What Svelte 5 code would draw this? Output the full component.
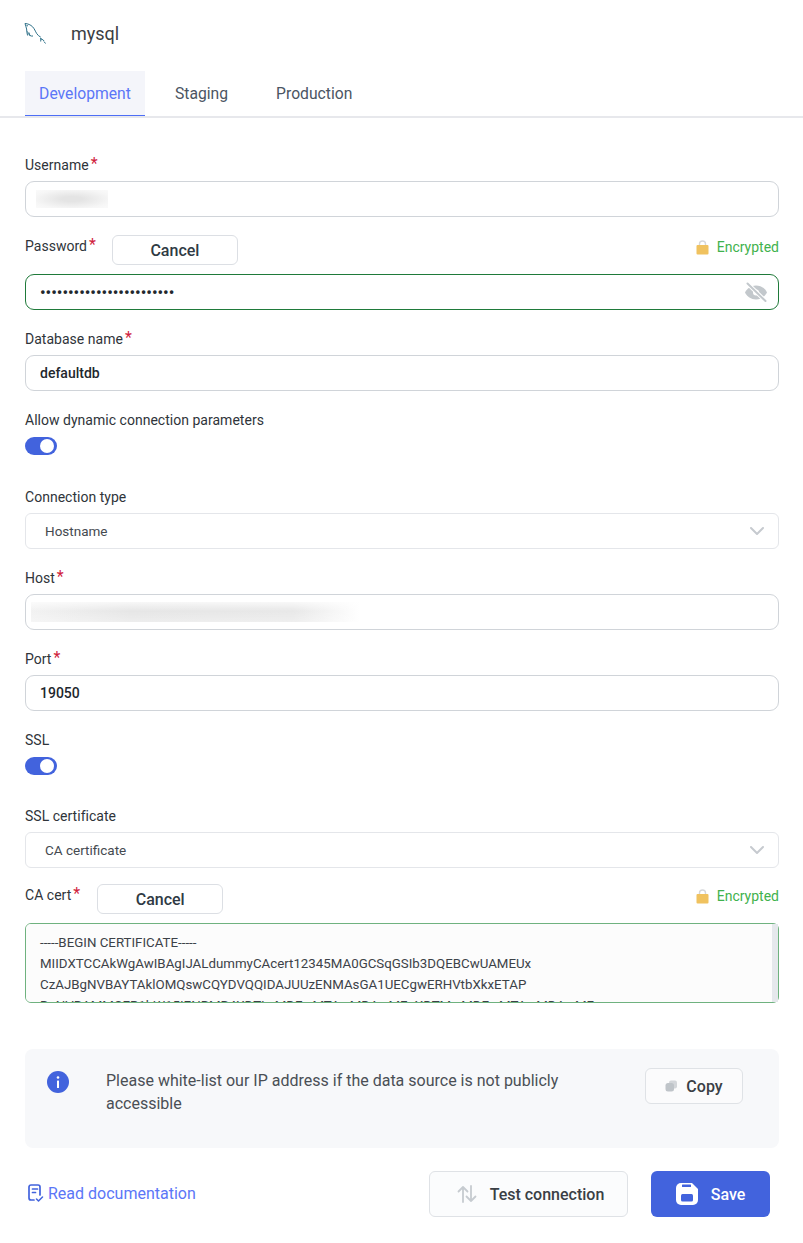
<script>
  const caCert = `-----BEGIN CERTIFICATE-----
MIIDXTCCAkWgAwIBAgIJALdummyCAcert12345MA0GCSqGSIb3DQEBCwUAMEUx
CzAJBgNVBAYTAklOMQswCQYDVQQIDAJUUzENMAsGA1UECgwERHVtbXkxETAP
BgNVBAMMCER1bW15IENBMB4XDTIwMDEwMTAwMDAwMFoXDTMwMDEwMTAwMDAwMFow
MEUxCzAJBgNVBAYTAklOMQswCQYDVQQIDAJUUzENMAsGA1UECgwERHVtbXk=
-----END CERTIFICATE-----`;

  let activeTab = $state('Development');
  let showPassword = $state(false);
  let dynamicParams = $state(true);
  let ssl = $state(true);
  const tabs = ['Development', 'Staging', 'Production'];
</script>

{#snippet star()}<span class="star">*</span>{/snippet}

{#snippet encrypted()}
  <span class="encrypted">
    <svg width="13" height="15" viewBox="0 0 13 15">
      <path d="M3.5 6V4a3 3 0 0 1 6 0v2" fill="none" stroke="#d5d7da" stroke-width="1.4" />
      <rect x="0.5" y="5" width="12" height="9.5" rx="1" fill="#f0c25f" />
    </svg>
    Encrypted
  </span>
{/snippet}

{#snippet chevron()}
  <svg class="chevron" width="16" height="10" viewBox="0 0 16 10">
    <path d="M2 2l6 6 6-6" fill="none" stroke="#c6cacf" stroke-width="2" stroke-linecap="round" stroke-linejoin="round" />
  </svg>
{/snippet}

<div class="page">
  <header class="title">
    <svg class="logo" width="24" height="24" viewBox="0 0 24 24" fill="none" stroke="#2f7189" stroke-width="1">
      <path d="M1 1.5c3 .2 5.500 1.300 7.500 3.200 2 2 2.700 4.500 4.300 7 1 1.500 2.300 2.600 4 3.500" />
      <path d="M1 1.500c.3 2 1.300 3.300 1.600 5.500.2 2 .2 4.500 1 6.500" />
      <path d="M3.500 9.500c.6 1.500.8 3 2.500 4 1 .5 2 .8 3 .5M5 10.500c.4 1.200.3 2 1 3" />
      <path d="M16 16.500c1 .8 3.200 .6 4 2.500M17 16l-.3 3.500M20 19.500l1.500 2" />
      <path d="M2.500 3.500l1.300.3" stroke-width="1.200" />
    </svg>
    <span class="title-text">mysql</span>
  </header>

  <nav class="tabs">
    {#each tabs as tab}
      <button type="button" class="tab" class:active={activeTab === tab} onclick={() => (activeTab = tab)}>{tab}</button>
    {/each}
  </nav>

  <form class="form" onsubmit={(e) => e.preventDefault()}>
    <div class="field">
      <div class="label">Username{@render star()}</div>
      <div class="input">
        <span class="blur user"></span>
      </div>
    </div>

    <div class="field">
      <div class="label-row">
        <div class="label">Password{@render star()}</div>
        <button type="button" class="cancel pw">Cancel</button>
        {@render encrypted()}
      </div>
      <div class="input valid">
        <input type={showPassword ? 'text' : 'password'} value="abcdefghijklmnopqrstuvwx" aria-label="Password" />
        <button type="button" class="eye" aria-label="Show password" onclick={() => (showPassword = !showPassword)}>
          <svg width="24" height="20" viewBox="0 0 24 20">
            <path d="M12 3.500C7 3.500 3 6.500 1 10.500c2 4 6 7 11 7s9-3 11-7c-2-4-6-7-11-7z" fill="#c3c8cc" />
            <circle cx="12" cy="10.500" r="3" fill="#fff" />
            <path d="M3.500 1.500l18 17.500" stroke="#fff" stroke-width="4" />
            <path d="M3.500 1.500l18 17.500" stroke="#c3c8cc" stroke-width="2" stroke-linecap="round" />
          </svg>
        </button>
      </div>
    </div>

    <div class="field">
      <div class="label">Database name{@render star()}</div>
      <div class="input"><input value="defaultdb" aria-label="Database name" /></div>
    </div>

    <div class="field toggle-field">
      <div class="label">Allow dynamic connection parameters</div>
      <button type="button" class="toggle" class:on={dynamicParams} aria-label="Allow dynamic connection parameters" onclick={() => (dynamicParams = !dynamicParams)}></button>
    </div>

    <div class="field">
      <div class="label">Connection type</div>
      <div class="input select"><span>Hostname</span>{@render chevron()}</div>
    </div>

    <div class="field">
      <div class="label">Host{@render star()}</div>
      <div class="input"><span class="blur host"></span></div>
    </div>

    <div class="field">
      <div class="label">Port{@render star()}</div>
      <div class="input"><input value="19050" aria-label="Port" /></div>
    </div>

    <div class="field toggle-field ssl">
      <div class="label">SSL</div>
      <button type="button" class="toggle" class:on={ssl} aria-label="SSL" onclick={() => (ssl = !ssl)}></button>
    </div>

    <div class="field tight">
      <div class="label">SSL certificate</div>
      <div class="input select"><span>CA certificate</span>{@render chevron()}</div>
    </div>

    <div class="field">
      <div class="label-row">
        <div class="label">CA cert{@render star()}</div>
        <button type="button" class="cancel ca">Cancel</button>
        {@render encrypted()}
      </div>
      <div class="cert-wrap">
        <textarea class="cert" aria-label="CA cert" value={caCert} spellcheck="false"></textarea>
      </div>
    </div>
  </form>

  <aside class="notice">
    <svg class="info" width="22" height="22" viewBox="0 0 22 22">
      <circle cx="11" cy="11" r="11" fill="#4263dd" />
      <rect x="10" y="9.500" width="2" height="7.500" rx="0.500" fill="#fff" />
      <circle cx="11" cy="6.500" r="1.300" fill="#fff" />
    </svg>
    <p>Please white-list our IP address if the data source is not publicly accessible</p>
    <button type="button" class="copy">
      <svg width="12" height="12" viewBox="0 0 12 12">
        <rect x="4" y="0.500" width="8" height="8" rx="2" fill="#d3d6da" />
        <rect x="0.500" y="3" width="8.500" height="8.500" rx="2.500" fill="#bfc4c9" />
      </svg>
      Copy
    </button>
  </aside>

  <footer class="actions">
    <a class="docs" href="#docs">
      <svg width="16" height="18" viewBox="0 0 16 18" fill="none" stroke="#4263dd" stroke-width="1.700" stroke-linecap="round" stroke-linejoin="round">
        <path d="M6 16H3a2 2 0 0 1-2-2V3a2 2 0 0 1 2-2h7a2 2 0 0 1 2 2v8" />
        <path d="M4.500 5h5M4.500 8.500h3" />
        <path d="M8.500 15l2 2 4-4" stroke-width="1.500" />
      </svg>
      Read documentation
    </a>
    <button type="button" class="test">
      <svg width="20" height="18" viewBox="0 0 20 18" fill="none" stroke="#c6cbd0" stroke-width="1.800" stroke-linecap="round" stroke-linejoin="round">
        <path d="M6 17V2M1.500 6.500L6 2l4.500 4.500" />
        <path d="M14 1v15M9.500 11.500L14 16l4.500-4.500" />
      </svg>
      Test connection
    </button>
    <button type="button" class="save">
      <svg width="22" height="22" viewBox="0 0 22 22">
        <path d="M5 0h11l6 6v11a5 5 0 0 1-5 5H5a5 5 0 0 1-5-5V5a5 5 0 0 1 5-5z" fill="#fff" />
        <rect x="6" y="1.500" width="9" height="2.500" rx="0.500" fill="#4263dd" />
        <rect x="5" y="11" width="12" height="7.500" rx="1.500" fill="#4263dd" />
      </svg>
      Save
    </button>
  </footer>
</div>

<style>
  :global(body) {
    margin: 0;
    background: #fff;
    font-family: Roboto, "Liberation Sans", sans-serif;
    color: #3a3f45;
  }

  .page {
    width: 803px;
    height: 1243px;
    overflow: hidden;
  }

  button {
    font-family: inherit;
    cursor: pointer;
  }

  .title {
    display: flex;
    align-items: center;
    height: 71px;
    padding: 0 25px 5px;
    box-sizing: border-box;
  }

  .logo {
    margin-top: 2px;
    margin-left: -1px;
  }

  .title-text {
    margin-left: 23px;
    font-size: 18px;
    color: #3b3e44;
  }

  .tabs {
    display: flex;
    height: 47px;
    box-sizing: border-box;
    padding-left: 25px;
    border-bottom: 2px solid #e7e8ec;
  }

  .tab {
    height: 45px;
    padding: 0 31px 0 17px;
    border: 0;
    background: none;
    font-size: 15.700px;
    color: #4b5563;
  }

  .tab.active {
    width: 120px;
    padding: 0;
    background: #f4f5fa;
    border-bottom: 1px solid #4d6ef5;
    color: #5b76f7;
    margin-right: 13px;
  }

  .form {
    padding: 36px 24px 0 25px;
  }

  .field {
    margin-bottom: 18px;
  }

  .field.tight {
    margin-bottom: 16px;
  }

  .toggle-field {
    margin-bottom: 31px;
  }

  .toggle-field.ssl {
    margin-bottom: 30px;
  }

  .label {
    display: flex;
    height: 22px;
    line-height: 22px;
    margin-bottom: 5px;
    font-size: 14px;
    letter-spacing: 0.02px;
    color: #2f343a;
  }

  .star {
    margin-left: 2px;
    font-size: 16px;
    line-height: 20px;
    color: #d0213c;
  }

  .label-row {
    display: flex;
    align-items: flex-start;
    margin-bottom: 9px;
  }

  .label-row .label {
    margin-bottom: 0;
  }

  .cancel {
    width: 126px;
    height: 30px;
    background: #fff;
    border: 1px solid #dcdfe4;
    border-radius: 6px;
    font-size: 16px;
    font-weight: 500;
    color: #2f3a44;
  }

  .cancel.pw {
    margin-left: 16px;
  }

  .cancel.ca {
    margin-left: 17px;
  }

  .encrypted {
    display: flex;
    align-items: center;
    gap: 8px;
    margin-left: auto;
    height: 22px;
    margin-top: 1px;
    font-size: 14px;
    color: #3fb24d;
  }

  .input {
    position: relative;
    display: flex;
    align-items: center;
    height: 36px;
    box-sizing: border-box;
    border: 1px solid #d0d4d9;
    border-radius: 9px;
    background: #fff;
  }

  .input.valid {
    border-color: #1f7a3a;
  }

  .input input {
    flex: 1;
    width: 100%;
    min-width: 0;
    height: 100%;
    padding: 0 14px;
    box-sizing: border-box;
    border: 0;
    outline: 0;
    background: none;
    font-family: inherit;
    font-size: 14px;
    font-weight: 500;
    color: #22272d;
  }

  .input.valid input {
    font-size: 16px;
  }

  .select {
    justify-content: space-between;
    padding: 0 13px 0 19px;
    border-color: #e4e6ea;
    border-radius: 6px;
    font-size: 13.500px;
    color: #454a50;
  }

  .blur {
    display: block;
    height: 20px;
  }

  .blur.user {
    width: 72px;
    height: 18px;
    margin-left: 10px;
    background: radial-gradient(ellipse at center, #e4e4e4 20%, #f6f6f6 75%, #fafafa 100%);
  }

  .blur.host {
    width: 328px;
    margin-left: 5px;
    background:
      linear-gradient(180deg, rgba(255, 255, 255, 0.7), rgba(255, 255, 255, 0) 45%, rgba(255, 255, 255, 0.3)),
      linear-gradient(90deg, #f2f2f2 0%, #e6e6e6 30%, #e8e8e8 80%, #fff 100%);
  }

  .eye {
    display: flex;
    padding: 0;
    margin-right: 10px;
    border: 0;
    background: none;
  }

  .toggle {
    position: relative;
    display: block;
    width: 32px;
    height: 18px;
    margin-top: 6px;
    padding: 0;
    border: 0;
    border-radius: 9px;
    background: #c9ced4;
  }

  .toggle.on {
    background: #4263dd;
  }

  .toggle::after {
    content: "";
    position: absolute;
    top: 2px;
    left: 2px;
    width: 14px;
    height: 14px;
    border-radius: 50%;
    background: #fff;
  }

  .toggle.on::after {
    left: 15px;
  }

  .cert-wrap {
    position: relative;
    height: 80px;
  }

  /* scrollbar track, drawn over the textarea's right edge */
  .cert-wrap::after {
    content: "";
    position: absolute;
    top: 1px;
    right: 1px;
    bottom: 1px;
    width: 6px;
    background: #e5e8ec;
    pointer-events: none;
  }

  .cert {
    display: block;
    width: 100%;
    height: 80px;
    box-sizing: border-box;
    padding: 8px 14px;
    border: 1px solid #6fb27f;
    border-radius: 6px;
    outline: 0;
    background: #fcfcfc;
    font-family: inherit;
    font-size: 13.300px;
    line-height: 21px;
    color: #3c4248;
    overflow-y: scroll;
    white-space: pre;
    resize: none;
  }

  .notice {
    display: flex;
    align-items: flex-start;
    height: 99px;
    box-sizing: border-box;
    margin: 46px 24px 0 25px;
    padding: 19px 36px 0 22px;
    border-radius: 8px;
    background: #f7f8fa;
  }

  .info {
    flex: none;
    margin-top: 3px;
  }

  .notice p {
    flex: 1;
    margin: 1px 60px 0 37px;
    font-size: 16px;
    line-height: 23px;
    color: #4a4f55;
  }

  .copy {
    display: flex;
    align-items: center;
    justify-content: center;
    gap: 9px;
    flex: none;
    width: 98px;
    height: 36px;
    border: 1px solid #dfe2e6;
    border-radius: 6px;
    background: #fbfbfc;
    font-size: 16px;
    font-weight: 500;
    color: #3a3f45;
  }

  .actions {
    display: flex;
    align-items: center;
    margin-top: 23px;
    padding: 0 33px 0 28px;
  }

  .docs {
    display: flex;
    align-items: center;
    gap: 4px;
    margin-top: -2px;
    margin-right: auto;
    font-size: 16px;
    color: #5b76f7;
    text-decoration: none;
  }

  .test,
  .save {
    display: flex;
    align-items: center;
    justify-content: center;
    height: 46px;
    border-radius: 6px;
    font-size: 16px;
    font-weight: 500;
  }

  .test {
    gap: 13px;
    width: 199px;
    padding-left: 10px;
    border: 1px solid #dfe2e6;
    background: #fbfcfd;
    color: #3a3f45;
  }

  .save {
    gap: 13px;
    width: 119px;
    margin-left: 23px;
    border: 0;
    background: #4263dd;
    color: #fff;
  }
</style>
